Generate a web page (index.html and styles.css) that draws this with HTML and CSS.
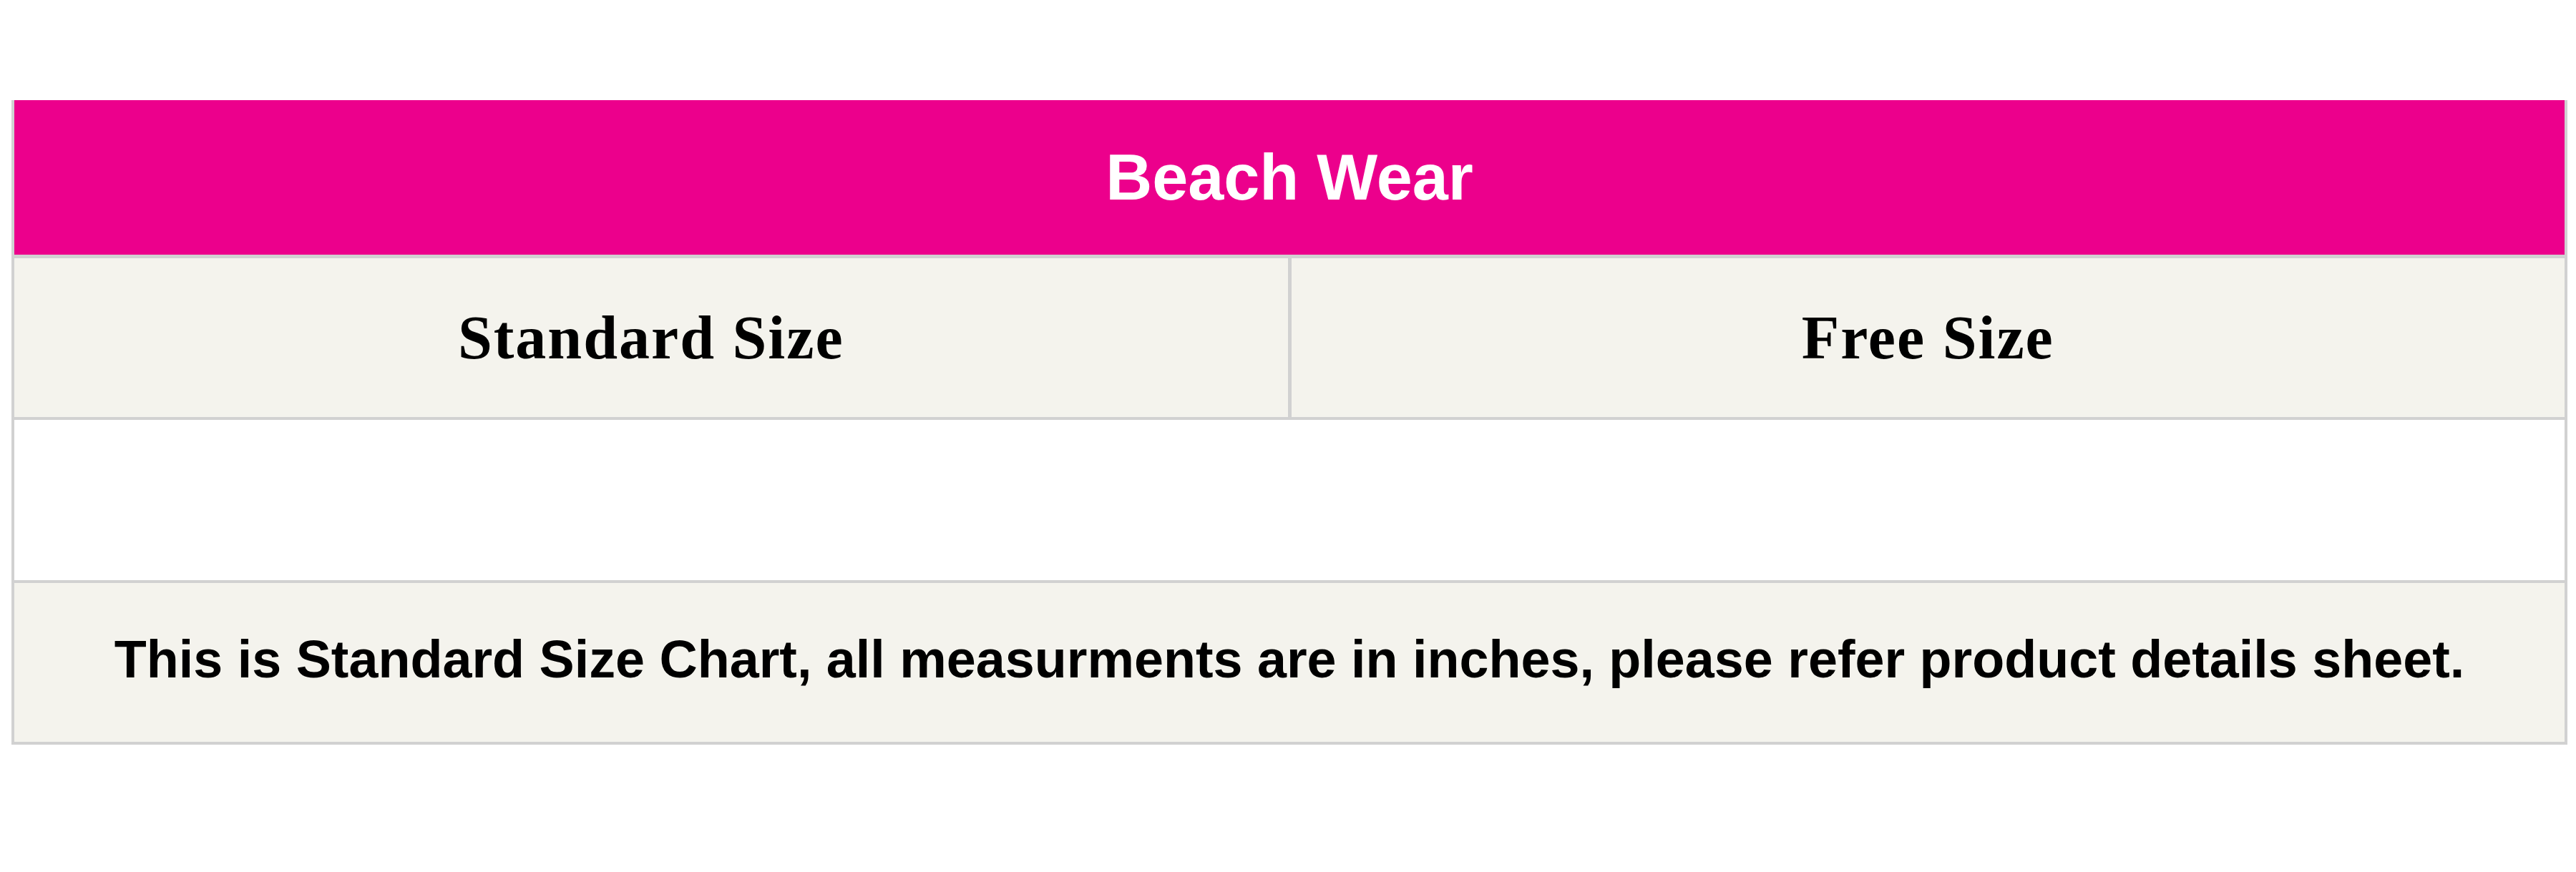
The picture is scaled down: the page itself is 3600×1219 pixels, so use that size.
FILE: index.html
```html
<!DOCTYPE html>
<html lang="en">
<head>
<meta charset="utf-8">
<title>Beach Wear Size Chart</title>
<link rel="stylesheet" href="styles.css">
</head>
<body>
  <div class="chart">
    <div class="title">Beach Wear</div>
    <div class="heads">
      <div class="head">Standard Size</div>
      <div class="head">Free Size</div>
    </div>
    <div class="blank"></div>
    <div class="note">This is Standard Size Chart, all measurments are in inches, please refer product details sheet.</div>
  </div>
</body>
</html>
```

FILE: styles.css
```css
html, body {
  margin: 0;
  padding: 0;
  background: #ffffff;
}

body {
  padding: 140px 0 0 16px;
}

.chart {
  width: 3572px;
  box-sizing: border-box;
  border: 4px solid #d1d1d1;
  border-top: 0;
  display: flex;
  flex-direction: column;
}

.title {
  height: 216px;
  background: #ec008c;
  color: #ffffff;
  border-bottom: 5px solid #d1d1d1;
  display: flex;
  align-items: center;
  justify-content: center;
  font-family: "Liberation Sans", Arial, sans-serif;
  font-weight: 700;
  font-size: 90px;
}

.heads {
  height: 222px;
  display: grid;
  grid-template-columns: 1fr 1fr;
  column-gap: 5px;
  background: #d1d1d1;
  border-bottom: 4px solid #d1d1d1;
}

.head {
  background: #f4f3ed;
  display: flex;
  align-items: center;
  justify-content: center;
  font-family: "Liberation Serif", "Times New Roman", serif;
  font-weight: 700;
  font-size: 86px;
  letter-spacing: 2px;
  color: #000000;
}

.blank {
  height: 224px;
  background: #ffffff;
  border-bottom: 4px solid #d1d1d1;
}

.note {
  height: 222px;
  background: #f4f3ed;
  display: flex;
  align-items: center;
  justify-content: center;
  box-sizing: border-box;
  padding-bottom: 10px;
  font-family: "Liberation Sans", Arial, sans-serif;
  font-weight: 700;
  font-size: 73.7px;
  color: #000000;
}
```
